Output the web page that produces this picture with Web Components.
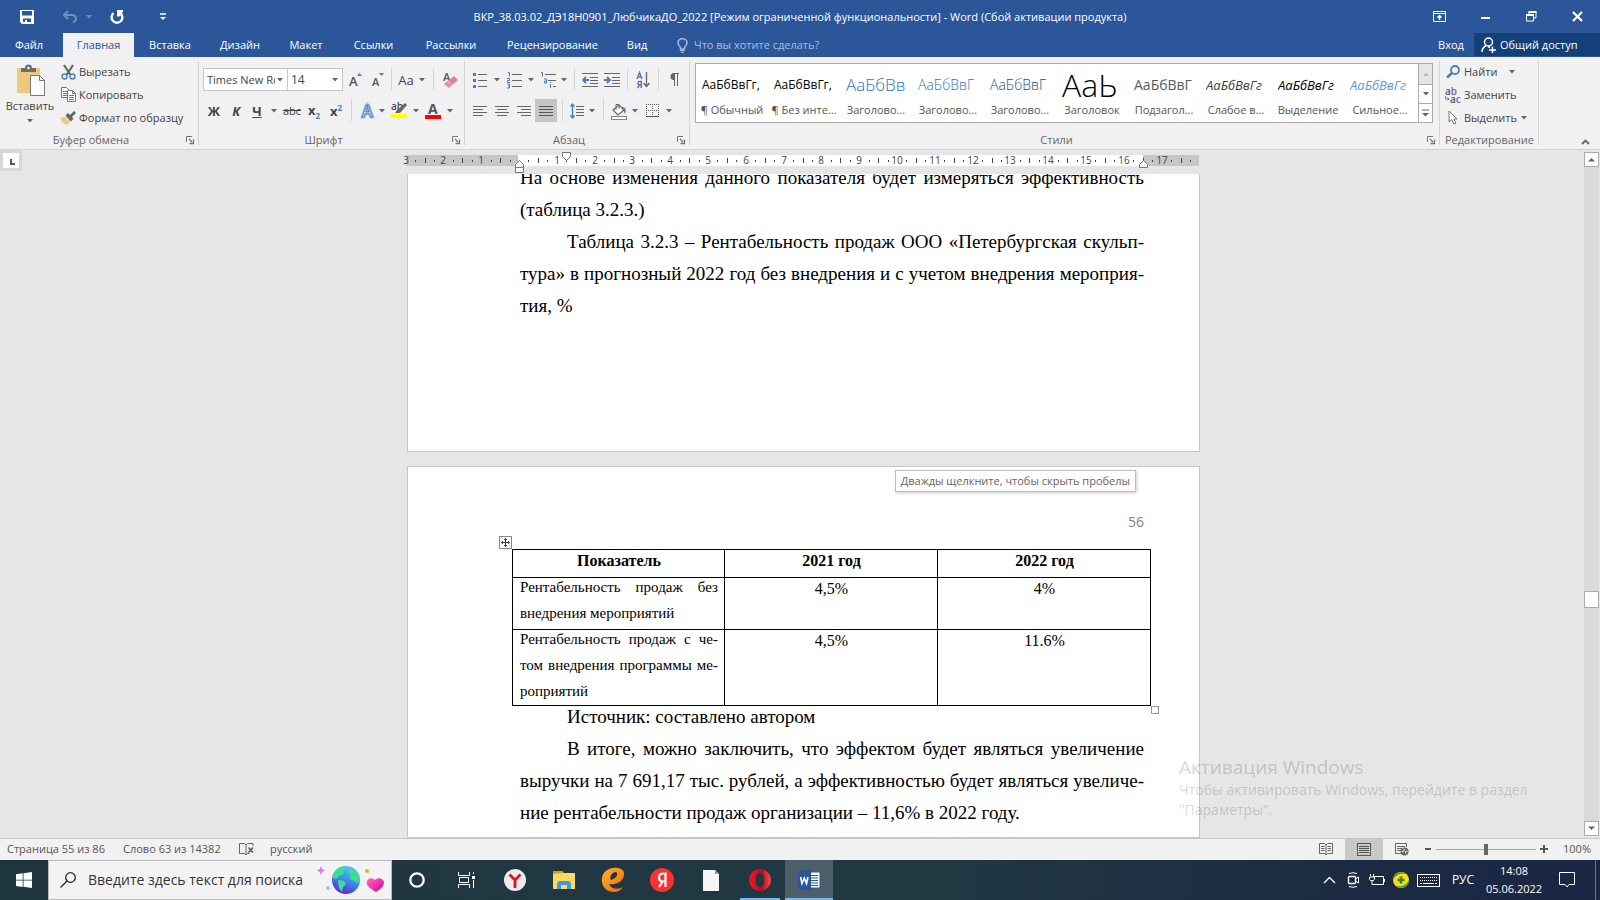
<!DOCTYPE html>
<html lang="ru">
<head>
<meta charset="utf-8">
<meta name="viewport" content="width=device-width, initial-scale=1">
<title>ВКР_38.03.02 – Word</title>
<style>
  html, body { margin: 0; height: 100%; }
  body { overflow: hidden; font: 11px/16px "Open Sans", "Noto Sans", sans-serif; color: #444; background: #e6e6e6; }
</style>
</head>
<body>
<word-app></word-app>

<script>
const ICONS = {
  save: [14, 14, '<path d="M0 0h14v14H2l-2-2z" fill="#fff"/><path d="M2 1h10v4.500H2zM3 8.500h8V12H7v-2H5v2H3z" fill="#2b579a"/>'],
  undo: [14, 13, '<path d="M5 1L1 5l4 4M1 5h8c5 0 5 7 1 7" fill="none" stroke="#6f8ec0" stroke-width="2"/>'],
  undoarrow: [6, 4, '<path d="M0 0h6L3 3.500z" fill="#6f8ec0"/>'],
  redo: [14, 14, '<path d="M3.500 3.200a5.400 5.400 0 1 0 7 0" fill="none" stroke="#fff" stroke-width="2.400"/><path d="M7 0h6v2.500h-1.500L12 4 9.500 6.500H7z" fill="#fff"/>'],
  custom: [6, 8, '<path d="M0 1h6" stroke="#fff" stroke-width="1.500"/><path d="M0 4h6L3 7z" fill="#fff"/>'],
  ribbonopts: [13, 11, '<path d="M.5 .5h12v10H.5zM.5 2.500h12" fill="none" stroke="#fff"/><path d="M6.500 9V5M4.500 6.500l2-2 2 2" fill="none" stroke="#fff" stroke-width="1.400"/>'],
  min: [9, 11, '<path d="M0 7h9" stroke="#fff" stroke-width="2"/>'],
  restore: [11, 11, '<path d="M.5 4h7v6h-7zM3 4V1h7v6H8" fill="none" stroke="#fff"/><path d="M0 4h8M2.500 1h8" stroke="#fff" stroke-width="2"/>'],
  close: [11, 11, '<path d="M1 1l9 9M10 1l-9 9" stroke="#fff" stroke-width="2.200"/>'],
  bulb: [11, 15, '<path d="M3.500 9.500C1 7 1 5.500 1 4.700a4.500 4 0 0 1 9 0c0 .8 0 2.300-2.500 4.800v1.500h-4z" fill="none" stroke="#a9bdda" stroke-width="1.500"/><path d="M3 12.500h5M4 14.300h3" stroke="#a9bdda" stroke-width="1.200"/>'],
  share: [15, 16, '<circle cx="7.500" cy="5" r="4" fill="none" stroke="#fff" stroke-width="1.500"/><path d="M1 15c0-3 1.500-5 4-6.500M7 9.500l2 1M8 13h7M11.500 9.500v6.500" fill="none" stroke="#fff" stroke-width="1.500"/>'],
  paste: [29, 31, '<rect x="1" y="3" width="23" height="25" fill="#edc87e"/><path d="M5 3h4a3.500 3.500 0 0 1 7 0h4v4H5z" fill="#6d6d6d"/><circle cx="12.500" cy="3" r="1.300" fill="#f1f1f1"/><path d="M14.500 10.500h9l5 5v15h-14z" fill="#fff" stroke="#777"/><path d="M23.500 10.500v5h5" fill="none" stroke="#777"/>'],
  cut: [15, 16, '<path d="M3 1l6.500 10M12 1L5.500 11" stroke="#666" stroke-width="2.200" fill="none"/><circle cx="3.500" cy="12.500" r="2.500" fill="none" stroke="#4a7ebb" stroke-width="1.400"/><circle cx="11.500" cy="12.500" r="2.500" fill="none" stroke="#4a7ebb" stroke-width="1.400"/>'],
  copy: [15, 15, '<path d="M.5 .5h5l2 2v8h-7z" fill="#fff" stroke="#777"/><path d="M2 4.500h4M2 6.500h4M2 8.500h4" stroke="#4a7ebb"/><path d="M6.500 3.500h5l3 3v8h-8z" fill="#fff" stroke="#777"/><path d="M11.500 3.500v3h3" stroke="#777" fill="none"/><path d="M8 8.500h5M8 10.500h5M8 12.500h5" stroke="#4a7ebb"/>'],
  brush: [16, 14, '<path d="M0 7l5-1 5 5-3 3C4 13 1 10 0 7z" fill="#edc48a"/><path d="M5.500 4.500L8 2l2 2 4-4 2 2-4 4 1.500 2-3 2.500z" fill="#666"/>'],
  launcher: [8, 8, '<path d="M.5 6V.5H6" fill="none" stroke="#777"/><path d="M3 3l3 3M7.500 3.500v4h-4" fill="none" stroke="#777" stroke-width="1.300"/>'],
  arrow: [6, 4, '<path d="M0 0h6L3 3.500z" fill="#666"/>'],
  grow: [13, 14, '<text x="0" y="13" font-size="13" font-weight="600" fill="#555">A</text><path d="M8 3h5l-2.500-3z" fill="#4a7ebb"/>'],
  shrink: [13, 14, '<text x="0" y="13" font-size="11" font-weight="600" fill="#555">A</text><path d="M7 0h5L9.500 3z" fill="#4a7ebb"/>'],
  clear: [15, 16, '<text x="0" y="9" font-size="11" font-weight="600" fill="#555">A</text><path d="M5 9l6-5 4 4-6 5z" fill="#e57f95"/><path d="M1 12l3-3 5 4-3 3z" fill="#e8909f"/>'],
  effects: [16, 16, '<text x="3" y="14" font-size="16" font-weight="600" fill="#fff" stroke="#a9c8ea" stroke-width="3" paint-order="stroke">A</text><text x="3" y="14" font-size="16" font-weight="600" fill="#fff" stroke="#3f7cc4">A</text>'],
  marker: [17, 17, '<text x="0" y="8" font-size="10" font-weight="600" fill="#444">ab</text><path d="M4 11l2-3 8-7 2 2-7 8z" fill="#666"/><rect y="12" width="16" height="4" fill="#ff0"/>'],
  fontcolor: [16, 17, '<text x="3" y="12" font-size="14" font-weight="700" fill="#555">A</text><rect y="13" width="16" height="4" fill="#f00"/>'],
  bullets: [14, 16, '<path d="M5 2.500h9M5 8.500h9M5 14.500h9" stroke="#666"/><path d="M0 1h3v3H0zM0 7h3v3H0zM0 13h3v3H0z" fill="#4a7ebb"/>'],
  numbers: [15, 16, '<path d="M5 2.500h10M5 8.500h10M5 14.500h10" stroke="#666"/><path d="M1 .5h1.500v4M0 6.500h2.500v2H.5v2H3M0 12h2.500v4H0M1 14h1.500" fill="none" stroke="#4a7ebb"/>'],
  multilevel: [16, 16, '<path d="M5 2.500h11M8 8.500h8M13 14.500h3" stroke="#666"/><path d="M1 .5h1.500v4M4 7h2.500v4H4.500V9H6M10.500 12v4M10.500 10v1" fill="none" stroke="#4a7ebb"/>'],
  dedent: [16, 14, '<path d="M0 .5h16M8 4.500h8M8 7.500h8M0 13.500h16M8 10.500h8" stroke="#666"/><path d="M7 7H1M4 4L1 7l3 3" fill="none" stroke="#4a7ebb" stroke-width="1.800"/>'],
  indent: [16, 14, '<path d="M0 .5h16M8 4.500h8M8 7.500h8M0 13.500h16M8 10.500h8" stroke="#666"/><path d="M0 7h6M3 4l3 3-3 3" fill="none" stroke="#4a7ebb" stroke-width="1.800"/>'],
  sort: [14, 16, '<path d="M1 7l2.500-6.500L6 7M1.800 5h3.500" fill="none" stroke="#4a7ebb" stroke-width="1.400"/><path d="M5.300 16V9.500H3.200c-1.500 0-1.700 3.300 0 3.300h2M3.500 13L1.500 16" fill="none" stroke="#8a58b0" stroke-width="1.400"/><path d="M10.500 0v14M7.500 11l3 3.500 3-3.500" fill="none" stroke="#666" stroke-width="1.300"/>'],
  pilcrow: [10, 13, '<path d="M5 0h5v1H9v12H8V1H6v12H5V7a3.500 3.500 0 0 1 0-7z" fill="#666"/>'],
  left: [14, 12, '<path d="M0 1.500h14M0 4.500h10M0 7.500h14M0 10.500h10" stroke="#666"/>'],
  center: [14, 12, '<path d="M0 1.500h14M2 4.500h10M0 7.500h14M2 10.500h10" stroke="#666"/>'],
  right: [14, 12, '<path d="M0 1.500h14M4 4.500h10M0 7.500h14M4 10.500h10" stroke="#666"/>'],
  justify: [14, 12, '<path d="M0 1.500h14M0 4.500h14M0 7.500h14M0 10.500h14" stroke="#555"/>'],
  spacing: [14, 16, '<path d="M6 3.500h8M6 6.500h8M6 9.500h8M6 12.500h8" stroke="#666"/><path d="M2.500 1v14M.5 3.500l2-2.500 2 2.500M.5 12.500l2 2.500 2-2.500" fill="none" stroke="#4a7ebb" stroke-width="1.400"/>'],
  shading: [16, 16, '<path d="M2 7l6-5 5 5-6 5z" fill="#fff" stroke="#666" stroke-width="1.200"/><path d="M5 7V1.500h3V6" fill="none" stroke="#666"/><path d="M11 4c3 0 5 2 3 7-1-1-1-4-3-5z" fill="#4a7ebb"/><rect x=".5" y="13.500" width="15" height="3" fill="#fff" stroke="#888"/>'],
  borders: [13, 13, '<path d="M.5 0v12M6.500 0v12M12.500 0v12M0 .5h13M0 6.500h13" stroke="#555" stroke-dasharray="1 1"/><path d="M0 12.500h13" stroke="#555"/>'],
  find: [14, 13, '<circle cx="9" cy="5" r="4" fill="none" stroke="#4a7ebb" stroke-width="1.800"/><path d="M6 8l-5 4.500" stroke="#4a7ebb" stroke-width="2.500"/>'],
  replace: [16, 16, '<text x="0" y="8" font-size="10" font-weight="600" fill="#555">a<tspan fill="#8a58b0">b</tspan></text><text x="5" y="16" font-size="10" font-weight="600" fill="#555">a<tspan fill="#4a7ebb">c</tspan></text><path d="M.5 9v3H4M2.500 10.500L4 12l-1.500 1.500" fill="none" stroke="#4a7ebb"/>'],
  pointer: [10, 15, '<path d="M1 1v11l2.500-2.500L6 14l2-1-2.300-4H9z" fill="#fff" stroke="#777"/>'],
  chevron: [9, 6, '<path d="M1 5l3.500-3.500L8 5" fill="none" stroke="#666" stroke-width="1.800"/>'],
  tab: [5, 6, '<path d="M1 0v5h4" fill="none" stroke="#555" stroke-width="2"/>'],
  up: [7, 5, '<path d="M0 4.500h7L3.500 1z" fill="#666"/>'],
  upoff: [6, 4, '<path d="M0 4h6L3 .5z" fill="#bbb"/>'],
  down: [7, 5, '<path d="M0 .5h7L3.500 4z" fill="#666"/>'],
  more: [7, 8, '<path d="M0 1h7" stroke="#666"/><path d="M0 4h7L3.500 7.500z" fill="#666"/>'],
  handle: [13, 13, '<rect x=".5" y=".5" width="12" height="12" fill="#fff" stroke="#888"/><path d="M6.500 2v9M2 6.500h9M5 3.500h3M5 9.500h3M3.500 5v3M9.500 5v3" stroke="#444"/>'],
  proof: [15, 13, '<path d="M7 2L5.500 .5h-5v10h5L7 12l1.500-1.500h2M7 2v10M7 2L8.500 .5H14V3" fill="none" stroke="#666"/><path d="M9.500 4.500l4.500 5M14 4.500l-4.500 5" stroke="#555" stroke-width="1.500"/>'],
  read: [14, 13, '<path d="M.5 .5h5L7 2 8.500 .5h5v10h-5L7 12l-1.500-1.500h-5zM7 2v10" fill="none" stroke="#666"/><path d="M2 3.500h3.500M2 5.500h3.500M2 7.500h3.500M8.500 3.500H12M8.500 5.500H12M8.500 7.500H12" stroke="#666"/>'],
  print: [14, 13, '<rect x=".5" y=".5" width="13" height="12" fill="none" stroke="#555"/><path d="M2 3.500h10M2 5.500h10M2 7.500h10M2 9.500h10" stroke="#555"/>'],
  web: [14, 13, '<path d="M6 10.500H.5V.5h11V4M2 3.500h8M2 5.500h5M2 7.500h4" fill="none" stroke="#666"/><circle cx="9.500" cy="8.500" r="4" fill="#666"/><path d="M8 5.500l1.500 1.500-1 1.500h-2M12.500 8l-2 .5v2" fill="none" stroke="#f1f1f1"/>'],
  minus: [6, 2, '<path d="M0 1h6" stroke="#555" stroke-width="2"/>'],
  plus: [8, 8, '<path d="M0 4h8M4 0v8" stroke="#555" stroke-width="2"/>'],
  win: [16, 16, '<path d="M0 2.200L6.700 1.300v6.400H0zM7.500 1.200L16 0v7.700H7.500zM0 8.500h6.700v6.400L0 14zM7.500 8.500H16V16l-8.500-1.200z" fill="#fff"/>'],
  search: [16, 16, '<circle cx="10.500" cy="5.500" r="4.800" fill="none" stroke="#222" stroke-width="1.300"/><path d="M7 9L.5 15.500" stroke="#222" stroke-width="1.300"/>'],
  planet: [68, 30, '<defs><linearGradient id="a" x1=".7" y1="0" x2=".3" y2="1"><stop offset="0" stop-color="#5cc8f5"/><stop offset=".5" stop-color="#3b8df0"/><stop offset="1" stop-color="#6a1fd0"/></linearGradient><linearGradient id="b" x1="0" y1="0" x2="1" y2="1"><stop offset="0" stop-color="#ff6ec0"/><stop offset="1" stop-color="#d4009a"/></linearGradient></defs><path d="M4 1l1.300 3L8 5.500 5.300 7 4 10 2.700 7 0 5.500 2.700 4z" fill="#e27af2"/><circle cx="11" cy="23" r="2" fill="#78d8ee"/><circle cx="29" cy="15" r="14" fill="url(#a)"/><path d="M16 10c2-5 6-8 11-9l2 3-3 2 1 3-5 2-3 3-3-1zM21 15l6 1 2 3-3 3-1 5-3-4zM33 4l6 2 4 9-3 3-4-3-3-1 1-4-3-2z" fill="#3be08e"/><circle cx="50" cy="6" r="2" fill="#f6a91b"/><path d="M59 27c-9-5-10-8-9-11 1-3 5-4 8-1 3-3 8-2 9 2 0 4-3 7-8 10z" fill="url(#b)"/>'],
  cortana: [16, 16, '<circle cx="8" cy="8" r="6.700" fill="none" stroke="#fff" stroke-width="2.300"/>'],
  taskview: [17, 16, '<path d="M.5 0v3.500h11V0M.5 16v-3.500h11V16M1.500 5.500h9v5h-9zM15.500 0v2M15.500 8v8" fill="none" stroke="#fff"/><rect x="14" y="4" width="3" height="3" fill="#fff"/>'],
  ybrowser: [22, 22, '<circle cx="11" cy="11" r="11" fill="#ececec"/><path d="M5.500 5.500L11 11l5.500-5.500M11 10.500V19" fill="none" stroke="#d8151b" stroke-width="2.800"/>'],
  folder: [22, 18, '<path d="M0 0h9l2 2h-1v5H0z" fill="#e2a100"/><rect y="2" width="22" height="16" fill="#ffd766"/><path d="M0 3l9-1 1-2H0z" fill="#dd9f10"/><path d="M4 18v-6l2-2h10l2 2v6h-4v-4H8v4z" fill="#3d9be0"/>'],
  eclipse: [24, 24, '<defs><linearGradient id="c" x1="0" y1="0" x2="1" y2="1"><stop offset="0" stop-color="#ffb22e"/><stop offset="1" stop-color="#f26a0f"/></linearGradient></defs><path d="M12 0C4 1 0 7 1 14c1 7 7 10 12 10 4 0 7-2 9-5-6 3-12 2-14-3 8 1 15-3 15-10 1-4-5-7-11-6zm3 4c2 1 2 6-5 8-2-3 1-8 5-8z" fill="url(#c)" fill-rule="evenodd"/>'],
  yandex: [24, 24, '<circle cx="12" cy="12" r="12" fill="#fc3130"/><path d="M15.500 19V5.500h-2.500c-2.500 0-4 1.500-4 4s1.500 4 4 4h2.500M12.500 13.500L9 19" fill="none" stroke="#fff" stroke-width="2.200"/>'],
  file: [16, 21, '<path d="M0 0h12l4 4v17H0z" fill="#f6f6f6"/><path d="M12 0v4h4z" fill="#999"/>'],
  opera: [22, 22, '<defs><linearGradient id="d" x1="0" y1="0" x2="1" y2="0"><stop offset="0" stop-color="#f0162c"/><stop offset=".6" stop-color="#c20d20"/><stop offset="1" stop-color="#f04a52"/></linearGradient></defs><path d="M11 0a11 11 0 1 0 0 22a11 11 0 1 0 0-22zm0 3.500c3 0 4.300 4 4.300 7.500s-1.300 7.500-4.300 7.500S6.700 14.500 6.700 11 8 3.500 11 3.500z" fill="url(#d)" fill-rule="evenodd"/>'],
  word: [22, 22, '<rect x="11" y="3" width="11" height="16" fill="#fff" stroke="#2b579a"/><path d="M13 6.500h7M13 9h7M13 11.500h7M13 14h7M13 16.500h7" stroke="#2b579a"/><path d="M0 2.500L13 0v22L0 19.500z" fill="#2b579a"/><path d="M2.500 8l1.500 6.500L6.300 9l2.200 5.500L10 8" fill="none" stroke="#fff" stroke-width="1.600"/>'],
  traychev: [13, 8, '<path d="M1 7l5.500-5.500L12 7" fill="none" stroke="#fff" stroke-width="1.400"/>'],
  camera: [12, 16, '<path d="M2 1.500Q6 0 10 1.500M2 14.500Q6 16 10 14.500" fill="none" stroke="#fff"/><rect x="1.500" y="4.500" width="7" height="7" rx="1" fill="none" stroke="#fff" stroke-width="1.400"/><path d="M8.500 7l3-2v6l-3-2" fill="none" stroke="#fff"/>'],
  battery: [16, 12, '<path d="M5 2.500h9.500v8h-9M15.500 5v3" fill="none" stroke="#fff"/><path d="M1.500 0v2.500M4.500 0v2.500M.5 3h5v2.500l-1 1h-3l-1-1zM3 6.500v4h3" fill="none" stroke="#fff"/>'],
  guard: [16, 16, '<circle cx="8" cy="8" r="8" fill="#ffd91c"/><path d="M0 8a8 8 0 0 1 13-6c-5-1-10 0-13 6zM16 8a8 8 0 0 1-13 6c5 1 10 0 13-6z" fill="#3f9c35"/><path d="M8 4.500v7M4.500 8h7" stroke="#2a8a2c" stroke-width="2.600"/>'],
  keyboard: [23, 13, '<rect x=".5" y=".5" width="22" height="12" fill="none" stroke="#fff"/><path d="M3 3.500h17M3 6.500h17" stroke="#fff" stroke-dasharray="1 1"/><path d="M3 9.500h2M6 9.500h11M18 9.500h2" stroke="#fff"/>'],
  notify: [16, 16, '<path d="M.5 .5h15v12H10L8 15l-2-2.500H.5z" fill="none" stroke="#fff"/>'],
};

const BUTTON_RESET = `button{font:inherit;color:inherit;background:none;border:0;padding:0;margin:0;cursor:default}`;

function define(name, html, setup) {
  const tpl = document.createElement('template');
  tpl.innerHTML = html;
  customElements.define(name, class extends HTMLElement {
    constructor() {
      super();
      this.attachShadow({ mode: 'open' }).append(tpl.content.cloneNode(true));
    }
    connectedCallback() { if (setup) setup(this, this.shadowRoot); }
  });
}

define('ui-icon', `<style>:host{display:inline-flex;flex:none}svg{display:block;overflow:visible}</style>`, (el, root) => {
  const [w, h, body] = ICONS[el.getAttribute('name')];
  root.innerHTML += `<svg width="${w}" height="${h}" viewBox="0 0 ${w} ${h}" font-family="Open Sans, sans-serif" aria-hidden="true">${body}</svg>`;
});

/* One cell of a ribbon row: a button of a given width holding an icon or a letter. */
define('tool-button', `<style>${BUTTON_RESET}
  :host{display:block;flex:none;height:23px}
  button{width:100%;height:100%;display:flex;align-items:center;justify-content:center;font-size:13px}
  :host([pressed]) button{background:#c5c5c5}
</style><button type="button"><slot></slot></button>`, (el, root) => {
  el.style.width = (el.getAttribute('w') || 22) + 'px';
  root.querySelector('button').setAttribute('aria-label', el.getAttribute('label') || 'Меню');
});

define('tool-separator', `<style>:host{display:flex;justify-content:center;flex:none;height:22px}i{width:1px;background:#d4d4d4}</style><i></i>`,
  el => { el.style.width = el.getAttribute('w') + 'px'; });

define('labelled-tool', `<style>${BUTTON_RESET}
  :host{display:block;height:23px}
  button{height:100%;display:flex;align-items:center}
  .pic{width:18px;display:flex;justify-content:center;margin-right:2px}
</style><button type="button"><span class="pic"><slot name="icon"></slot></span><slot></slot></button>`);

define('ribbon-group', `<style>${BUTTON_RESET}
  :host{display:flex;flex:none;flex-direction:column;box-sizing:border-box;position:relative;padding:3px 4px 0;color:#444}
  :host::after{content:"";position:absolute;right:0;top:4px;bottom:4px;width:1px;background:#d4d4d4}
  .body{height:72px;display:flex}
  ::slotted(*){flex:1;min-width:0}
  footer{display:flex;height:18px;align-items:center;color:#666}
  footer span{flex:1;text-align:center}
  footer button{display:none;width:8px;height:8px;margin-right:1px}
  :host([launcher]) footer span{padding-right:8px}
  :host([launcher]) footer button{display:flex}
</style><div class="body"><slot></slot></div><footer><span></span><button type="button" aria-label="Параметры"><ui-icon name="launcher"></ui-icon></button></footer>`,
  (el, root) => { root.querySelector('span').textContent = el.getAttribute('name'); });

define('title-bar', `<style>${BUTTON_RESET}
  :host{display:grid;grid-template-columns:1fr auto 1fr;align-items:center;height:33px;background:#2b579a;color:#fff}
  .quick,.win{display:flex;align-items:center;height:100%}
  .quick button,.win button{display:flex;justify-content:center;align-items:center}
  .quick button{width:28px}
  .quick{padding-left:13px}
  .quick .u{margin-left:15px}.quick .a{width:10px}.quick .r{margin-left:9px}.quick .c{margin-left:18px}
  .win{justify-content:flex-end}.win button{width:46px}
  h1{font-size:11px;line-height:16px;font-weight:400;margin:0;white-space:nowrap}
</style>
<div class="quick">
  <button type="button" aria-label="Сохранить"><ui-icon name="save"></ui-icon></button>
  <button type="button" class="u" aria-label="Отменить"><ui-icon name="undo"></ui-icon></button>
  <button type="button" class="a" aria-label="Список отмены"><ui-icon name="undoarrow"></ui-icon></button>
  <button type="button" class="r" aria-label="Повторить"><ui-icon name="redo"></ui-icon></button>
  <button type="button" class="c" aria-label="Настройка панели"><ui-icon name="custom"></ui-icon></button>
</div>
<h1>ВКР_38.03.02_ДЭ18Н0901_ЛюбчикаДО_2022 [Режим ограниченной функциональности] - Word (Сбой активации продукта)</h1>
<div class="win">
  <button type="button" aria-label="Параметры ленты"><ui-icon name="ribbonopts"></ui-icon></button>
  <button type="button" aria-label="Свернуть"><ui-icon name="min"></ui-icon></button>
  <button type="button" aria-label="Восстановить"><ui-icon name="restore"></ui-icon></button>
  <button type="button" aria-label="Закрыть"><ui-icon name="close"></ui-icon></button>
</div>`);

define('ribbon-tabs', `<style>${BUTTON_RESET}
  :host{display:flex;height:24px;background:#2b579a;color:#fff}
  button{flex:none}
  .on{background:#f1f1f1;color:#2b579a}
  label{flex:1;min-width:0;display:flex;align-items:center;gap:6px;padding-left:15px}
  input{flex:1;min-width:0;border:0;padding:0;background:none;font:inherit;color:#fff;outline:0}
  input::placeholder{color:#a9bdda;opacity:1}
  .in{width:46px}
  .share{width:126px;background:#134079;display:flex;align-items:center;gap:4px;padding-left:7px;height:23px}
</style>
<button type="button" style="width:58px;margin-right:5px">Файл</button>
<button type="button" class="on" style="width:71px">Главная</button>
<button type="button" style="width:72px">Вставка</button>
<button type="button" style="width:68px">Дизайн</button>
<button type="button" style="width:64px">Макет</button>
<button type="button" style="width:71px">Ссылки</button>
<button type="button" style="width:84px">Рассылки</button>
<button type="button" style="width:119px">Рецензирование</button>
<button type="button" style="width:50px">Вид</button>
<label><ui-icon name="bulb"></ui-icon><input type="text" placeholder="Что вы хотите сделать?" aria-label="Помощник"></label>
<button type="button" class="in">Вход</button>
<button type="button" class="share"><ui-icon name="share"></ui-icon>Общий доступ</button>`);

define('style-card', `<style>${BUTTON_RESET}
  :host{display:block;width:72px;flex:none}
  button{width:100%;height:100%;display:flex;flex-direction:column;overflow:hidden}
  .sample{height:37px;line-height:42px;margin:0 6px;width:60px;overflow:hidden;white-space:nowrap;text-align:left;color:var(--ink,#000);font-size:var(--size,12px);font-style:var(--slant,normal);font-weight:var(--weight,400)}
  .label{height:20px;line-height:18px;width:100%;text-align:center;white-space:nowrap;color:#555}
</style><button type="button"><span class="sample"><slot></slot></span><span class="label"></span></button>`,
  (el, root) => { root.querySelector('.label').textContent = el.getAttribute('name'); });

define('style-gallery', `<style>${BUTTON_RESET}
  :host{display:flex;height:60px;box-sizing:border-box;border:1px solid #ababab;background:#fff;margin:3px 3px 0 1px}
  .list{flex:1;min-width:0;display:flex;overflow:hidden}
  .nav{width:14px;display:grid;grid-template-rows:21px 19px 18px}
  .nav button{display:flex;align-items:center;justify-content:center;border-left:1px solid #ababab;border-bottom:1px solid #ababab}
  .nav button:first-child{background:#e6e6e6}.nav button:last-child{border-bottom:0}
</style>
<div class="list">
  <style-card name="¶ Обычный">АаБбВвГг,</style-card>
  <style-card name="¶ Без инте...">АаБбВвГг,</style-card>
  <style-card name="Заголово..." style="--ink:#2e74b5;--size:17px;--weight:300">АаБбВв</style-card>
  <style-card name="Заголово..." style="--ink:#2e74b5;--size:14px;--weight:300">АаБбВвГ</style-card>
  <style-card name="Заголово..." style="--ink:#1f4d78;--size:14px;--weight:300">АаБбВвГ</style-card>
  <style-card name="Заголовок" style="--size:32px;--weight:300">АаЬ</style-card>
  <style-card name="Подзагол..." style="--ink:#5a5a5a;--size:14px">АаБбВвГ</style-card>
  <style-card name="Слабое в..." style="--ink:#404040;--slant:italic;--size:13px">АаБбВвГг</style-card>
  <style-card name="Выделение" style="--slant:italic;--size:13px">АаБбВвГг</style-card>
  <style-card name="Сильное..." style="--ink:#5b9bd5;--slant:italic;--size:13px">АаБбВвГг</style-card>
</div>
<div class="nav">
  <button type="button" aria-label="Вверх"><ui-icon name="upoff"></ui-icon></button>
  <button type="button" aria-label="Вниз"><ui-icon name="arrow"></ui-icon></button>
  <button type="button" aria-label="Все стили"><ui-icon name="more"></ui-icon></button>
</div>`);

define('combo-box', `<style>
  :host{display:block;position:relative;flex:none;height:23px}
  select{appearance:none;width:100%;height:100%;box-sizing:border-box;border:1px solid #c6c6c6;border-radius:0;background:#fff;font:inherit;font-size:12px;color:#444;padding:0 12px 0 3px;margin:0;outline:0}
  ui-icon{position:absolute;right:5px;top:10px;pointer-events:none}
</style><select></select><ui-icon name="arrow"></ui-icon>`, (el, root) => {
  const s = root.querySelector('select');
  s.append(new Option(el.getAttribute('value')));
  s.setAttribute('aria-label', el.getAttribute('label'));
  if (el.hasAttribute('small')) s.style.fontSize = '11px';
});

define('word-ribbon', `<style>${BUTTON_RESET}
  :host{display:flex;height:92px;background:#f1f1f1;border-bottom:1px solid #d2d2d2}
  .rows{display:flex;flex-direction:column;padding-top:8px;gap:8px}
  .row{display:flex;height:23px}
  .clip{display:flex}
  .paste{width:52px;display:flex;flex-direction:column;align-items:center;padding-top:5px}
  .paste ui-icon:last-child{margin-top:5px}
  .paste span{margin-top:2px}
  .stack{margin-left:3px}
  b,i,u,s{font-size:13px;line-height:16px}
  i,u{font-weight:700} s{font-size:11px}
  sub,sup{font-size:8px;line-height:8px;color:#4a7ebb}
  .fold{flex:1;display:flex;justify-content:flex-end;align-items:flex-end;padding:0 10px 2px 0}
  .fold button{height:14px}
</style>
<ribbon-group name="Буфер обмена" launcher style="width:199px"><div class="clip">
  <button type="button" class="paste"><ui-icon name="paste"></ui-icon><span>Вставить</span><ui-icon name="arrow"></ui-icon></button>
  <div class="stack">
    <labelled-tool><ui-icon slot="icon" name="cut"></ui-icon>Вырезать</labelled-tool>
    <labelled-tool><ui-icon slot="icon" name="copy"></ui-icon>Копировать</labelled-tool>
    <labelled-tool><ui-icon slot="icon" name="brush"></ui-icon>Формат по образцу</labelled-tool>
  </div></div>
</ribbon-group>
<ribbon-group name="Шрифт" launcher style="width:266px"><div class="rows">
  <div class="row">
    <combo-box small value="Times New Roman" label="Шрифт" style="width:85px"></combo-box>
    <combo-box value="14" label="Размер" style="width:56px;margin-left:-1px"></combo-box>
    <tool-button w="24" label="Увеличить размер"><ui-icon name="grow"></ui-icon></tool-button>
    <tool-button label="Уменьшить размер"><ui-icon name="shrink"></ui-icon></tool-button>
    <tool-separator w="5"></tool-separator>
    <tool-button w="24" label="Регистр">Aa</tool-button>
    <tool-button w="8"><ui-icon name="arrow"></ui-icon></tool-button>
    <tool-separator w="14"></tool-separator>
    <tool-button w="20" label="Очистить формат"><ui-icon name="clear"></ui-icon></tool-button>
  </div>
  <div class="row">
    <tool-button label="Полужирный"><b>Ж</b></tool-button>
    <tool-button label="Курсив"><i>К</i></tool-button>
    <tool-button w="20" label="Подчеркнутый"><u>Ч</u></tool-button>
    <tool-button w="14"><ui-icon name="arrow"></ui-icon></tool-button>
    <tool-button label="Зачеркнутый"><s>abc</s></tool-button>
    <tool-button label="Подстрочный"><b>x<sub>2</sub></b></tool-button>
    <tool-button label="Надстрочный"><b>x<sup>2</sup></b></tool-button>
    <tool-separator w="9"></tool-separator>
    <tool-button label="Эффекты"><ui-icon name="effects"></ui-icon></tool-button>
    <tool-button w="8"><ui-icon name="arrow"></ui-icon></tool-button>
    <tool-button w="26" label="Цвет выделения"><ui-icon name="marker"></ui-icon></tool-button>
    <tool-button w="8"><ui-icon name="arrow"></ui-icon></tool-button>
    <tool-button w="26" label="Цвет текста"><ui-icon name="fontcolor"></ui-icon></tool-button>
    <tool-button w="8"><ui-icon name="arrow"></ui-icon></tool-button>
  </div></div>
</ribbon-group>
<ribbon-group name="Абзац" launcher style="width:225px"><div class="rows">
  <div class="row">
    <tool-button label="Маркеры"><ui-icon name="bullets"></ui-icon></tool-button>
    <tool-button w="12"><ui-icon name="arrow"></ui-icon></tool-button>
    <tool-button label="Нумерация"><ui-icon name="numbers"></ui-icon></tool-button>
    <tool-button w="12"><ui-icon name="arrow"></ui-icon></tool-button>
    <tool-button label="Многоуровневый список"><ui-icon name="multilevel"></ui-icon></tool-button>
    <tool-button w="10"><ui-icon name="arrow"></ui-icon></tool-button>
    <tool-separator w="10"></tool-separator>
    <tool-button label="Уменьшить отступ"><ui-icon name="dedent"></ui-icon></tool-button>
    <tool-button label="Увеличить отступ"><ui-icon name="indent"></ui-icon></tool-button>
    <tool-separator w="8"></tool-separator>
    <tool-button w="24" label="Сортировка"><ui-icon name="sort"></ui-icon></tool-button>
    <tool-separator w="6"></tool-separator>
    <tool-button w="26" label="Все знаки"><ui-icon name="pilcrow"></ui-icon></tool-button>
  </div>
  <div class="row">
    <tool-button label="По левому краю"><ui-icon name="left"></ui-icon></tool-button>
    <tool-button label="По центру"><ui-icon name="center"></ui-icon></tool-button>
    <tool-button label="По правому краю"><ui-icon name="right"></ui-icon></tool-button>
    <tool-button label="По ширине" pressed><ui-icon name="justify"></ui-icon></tool-button>
    <tool-separator w="10"></tool-separator>
    <tool-button w="20" label="Интервал"><ui-icon name="spacing"></ui-icon></tool-button>
    <tool-button w="10"><ui-icon name="arrow"></ui-icon></tool-button>
    <tool-separator w="12"></tool-separator>
    <tool-button w="20" label="Заливка"><ui-icon name="shading"></ui-icon></tool-button>
    <tool-button w="12"><ui-icon name="arrow"></ui-icon></tool-button>
    <tool-button label="Границы"><ui-icon name="borders"></ui-icon></tool-button>
    <tool-button w="12"><ui-icon name="arrow"></ui-icon></tool-button>
  </div></div>
</ribbon-group>
<ribbon-group name="Стили" launcher style="flex:0 1 750px;min-width:0"><style-gallery></style-gallery></ribbon-group>
<ribbon-group name="Редактирование" style="width:99px"><div>
  <labelled-tool><ui-icon slot="icon" name="find"></ui-icon>Найти<ui-icon name="arrow" style="margin-left:12px"></ui-icon></labelled-tool>
  <labelled-tool><ui-icon slot="icon" name="replace"></ui-icon>Заменить</labelled-tool>
  <labelled-tool><ui-icon slot="icon" name="pointer"></ui-icon>Выделить<ui-icon name="arrow" style="margin-left:4px"></ui-icon></labelled-tool>
</div></ribbon-group>
<div class="fold"><button type="button" aria-label="Свернуть ленту"><ui-icon name="chevron"></ui-icon></button></div>`);

/* Horizontal ruler: numbers every centimetre, a tick at each half, dots at the quarters. */
define('doc-ruler', `<style>:host{display:block;width:793px;height:24px;flex:none;position:relative;z-index:1}svg{display:block;overflow:visible}</style>`, (el, root) => {
  const cm = 37.8, zero = 112;
  let s = '<rect x="-1" y="5" width="112" height="11" fill="#c6c6c6"/><rect x="111" y="5" width="625" height="11" fill="#fff"/><rect x="736" y="5" width="56" height="11" fill="#c6c6c6"/>';
  for (let q = -12; q <= 71; q++) {
    const x = Math.round(zero + q * cm / 4), m = ((q % 4) + 4) % 4;
    if (m === 0) { if (q) s += `<text x="${x}" y="14" text-anchor="middle">${Math.abs(q / 4)}</text>`; }
    else s += m === 2 ? `<rect x="${x}" y="8" width="1" height="5"/>` : `<rect x="${x}" y="10" width="1" height="2"/>`;
  }
  const st = 'fill="#fff" stroke="#777"';
  s += `<path d="M155.500 2.500h8v4l-4 4-4-4z" ${st}/><path d="M108.500 17.500v-3l4-4 4 4v3zM108.500 17.500h8v5h-8z" ${st}/><path d="M732.500 17.500v-3l4-4 4 4v3z" ${st}/>`;
  root.innerHTML += `<svg width="793" height="24" fill="#444" font-size="10" font-family="Open Sans, sans-serif">${s}</svg>`;
});

define('doc-page', `<style>
  :host{display:block;flex:none;box-sizing:border-box;width:793px;background:#fff;border:1px solid #c6c6c6;padding:0 55px 0 112px;position:relative;font:19px/32px "Liberation Serif","Times New Roman",serif;color:#000}
</style><slot></slot>`);

/* A text line as Word broke it; "full" stretches it to both margins. */
define('doc-line', `<style>
  :host{display:block;white-space:nowrap;text-align-last:left}
  :host([full]){text-align-last:justify}
  :host([first]){padding-left:47px}
</style><slot></slot>`);

define('data-table', `<style>
  :host{display:block;position:relative;width:639px;margin:17px 0 0 -8px}
  table{width:100%;border-collapse:collapse;table-layout:fixed;font-size:16px;line-height:21px;text-align:center}
  th,td{border:1px solid #000;padding:0 6px 0 7px;vertical-align:top}
  tbody th{font-weight:400;font-size:15px;line-height:26px}
  tbody th div{margin-top:-4px}
  .move{position:absolute;left:-13px;top:-13px}
  .size{position:absolute;right:-8px;bottom:-8px;width:6px;height:6px;border:1px solid #999;background:#fff}
</style>
<table>
  <colgroup><col style="width:212px"><col><col></colgroup>
  <thead><tr style="height:28px"><th>Показатель</th><th>2021 год</th><th>2022 год</th></tr></thead>
  <tbody>
    <tr style="height:52px"><th scope="row"><div><doc-line full>Рентабельность продаж без</doc-line><doc-line>внедрения мероприятий</doc-line></div></th><td>4,5%</td><td>4%</td></tr>
    <tr style="height:76px"><th scope="row"><div><doc-line full>Рентабельность продаж с че-</doc-line><doc-line full>том внедрения программы ме-</doc-line><doc-line>роприятий</doc-line></div></th><td>4,5%</td><td>11.6%</td></tr>
  </tbody>
</table>
<ui-icon name="handle" class="move"></ui-icon><span class="size"></span>`);

define('v-scrollbar', `<style>${BUTTON_RESET}
  :host{display:flex;flex-direction:column;background:#dadada;margin:2px 1px 2px 0}
  button,.thumb{box-sizing:border-box;height:15px;background:#fff;border:1px solid #ababab;display:flex;align-items:center;justify-content:center}
  .before{flex:424}.after{flex:213}
  .thumb{height:17px}
</style><button type="button" aria-label="Прокрутить вверх"><ui-icon name="up"></ui-icon></button><div class="before"></div><div class="thumb"></div><div class="after"></div><button type="button" aria-label="Прокрутить вниз"><ui-icon name="down"></ui-icon></button>`);

define('doc-workspace', `<style>${BUTTON_RESET}
  :host{display:grid;grid-template-columns:23px 1fr 16px;flex:1;min-height:0;background:#e6e6e6;position:relative}
  .corner{width:22px;height:21px;background:#d8d8d8;display:flex;align-items:center;justify-content:center}
  .corner button{width:16px;height:15px;background:#fff;display:flex;align-items:center;justify-content:center;padding:3px 0 0 2px;box-sizing:border-box}
  main{display:flex;flex-direction:column;align-items:center;min-height:0;min-width:0}
  .view{flex:1;min-height:0;overflow:hidden;display:flex;flex-direction:column;gap:14px}
  .one{height:290px;margin-top:-12px;border-top:0}
  .two{flex:1 0 372px;padding-top:45px}
  .num{font:14px/20px "Open Sans",sans-serif;color:#7f7f7f;text-align:right}
  .src{line-height:22px;margin-bottom:5px}
  .tip{position:absolute;right:63px;top:3px;border:1px solid #bebebe;background:#fff;font:11px/20px "Open Sans",sans-serif;color:#6b5f5f;padding:0 5px;box-shadow:1px 1px 3px #0003}
  .mark{position:absolute;right:68px;bottom:18px;width:353px;white-space:nowrap;font:14px/20px "Open Sans",sans-serif;color:#0000002e}
  .mark strong{display:block;font-weight:400;font-size:19px;line-height:26px}
</style>
<div class="corner"><button type="button" aria-label="Табуляция"><ui-icon name="tab"></ui-icon></button></div>
<main>
  <doc-ruler></doc-ruler>
  <div class="view">
    <doc-page class="one">
      <doc-line full>На основе изменения данного показателя будет измеряться эффективность</doc-line>
      <doc-line>(таблица 3.2.3.)</doc-line>
      <doc-line full first>Таблица 3.2.3 – Рентабельность продаж ООО «Петербургская скульп-</doc-line>
      <doc-line full>тура» в прогнозный 2022 год без внедрения и с учетом внедрения мероприя-</doc-line>
      <doc-line>тия, %</doc-line>
    </doc-page>
    <doc-page class="two">
      <div class="tip" role="tooltip">Дважды щелкните, чтобы скрыть пробелы</div>
      <div class="num">56</div>
      <data-table></data-table>
      <doc-line class="src" first>Источник: составлено автором</doc-line>
      <doc-line full first>В итоге, можно заключить, что эффектом будет являться увеличение</doc-line>
      <doc-line full>выручки на 7 691,17 тыс. рублей, а эффективностью будет являться увеличе-</doc-line>
      <doc-line>ние рентабельности продаж организации – 11,6% в 2022 году.</doc-line>
    </doc-page>
  </div>
</main>
<v-scrollbar></v-scrollbar>
<div class="mark"><strong>Активация Windows</strong>Чтобы активировать Windows, перейдите в раздел<br>"Параметры".</div>`);

define('status-bar', `<style>${BUTTON_RESET}
  :host{display:flex;align-items:stretch;height:21px;background:#f1f1f1;border-top:1px solid #c6c6c6;color:#555;padding:0 9px 0 7px}
  button{display:flex;align-items:center;flex:none;padding-bottom:1px}
  .view{width:38px;justify-content:center}.on{background:#c8c8c8}
  .sp{flex:1}
  input{appearance:none;width:100px;height:20px;margin:0 4px;background:linear-gradient(#a6a6a6,#a6a6a6) center/100% 1px no-repeat}
  input::-webkit-slider-thumb{appearance:none;width:4px;height:11px;background:#666}
  .sign{width:8px;justify-content:center}
  .pct{margin-left:15px}
</style>
<button type="button" style="width:116px">Страница 55 из 86</button>
<button type="button" style="width:116px">Слово 63 из 14382</button>
<button type="button" style="width:31px" aria-label="Проверка правописания"><ui-icon name="proof"></ui-icon></button>
<button type="button">русский</button>
<span class="sp"></span>
<button type="button" class="view" aria-label="Режим чтения"><ui-icon name="read"></ui-icon></button>
<button type="button" class="view on" aria-label="Разметка страницы"><ui-icon name="print"></ui-icon></button>
<button type="button" class="view" aria-label="Веб-документ"><ui-icon name="web"></ui-icon></button>
<button type="button" class="sign" style="margin-left:3px" aria-label="Уменьшить"><ui-icon name="minus"></ui-icon></button>
<input type="range" min="0" max="100" value="50" aria-label="Масштаб">
<button type="button" class="sign" aria-label="Увеличить"><ui-icon name="plus"></ui-icon></button>
<button type="button" class="pct">100%</button>`);

define('task-app', `<style>${BUTTON_RESET}
  :host{display:block;width:48px;height:40px;flex:none;position:relative}
  button{width:100%;height:100%;display:flex;align-items:center;justify-content:center}
  :host([open]) button{box-shadow:inset 0 -2px #76b9ed}
  :host([open]){width:40px;margin:0 4px}
  :host([active]){background:#4d5f68;width:48px;margin:0}
</style><button type="button"><slot></slot></button>`, (el, root) =>
  root.querySelector('button').setAttribute('aria-label', el.getAttribute('label')));

define('task-bar', `<style>${BUTTON_RESET}
  :host{display:flex;height:40px;background:linear-gradient(90deg,#20363f 0,#213742 60%,#1b2a42 85%,#1a2744);color:#fff}
  label{width:344px;box-sizing:border-box;border:1px solid #b9b9b9;background:#f3f3f3;display:flex;align-items:center;padding:0 6px 0 11px}
  input{flex:1;min-width:0;border:0;background:none;padding:0;margin-left:12px;font:14px/20px "Open Sans",sans-serif;outline:0}
  input::placeholder{color:#333;opacity:1}
  .apps{display:flex;gap:1px;flex:1;padding-left:1px}
  .tray{display:flex}
  .tray button{display:flex;align-items:center;justify-content:center;width:24px}
  .tray .wide{width:30px}
  .tray .lang{width:40px;font-size:12px}
  .tray .clock{width:62px;flex-direction:column;line-height:18px}
  .tray .note{width:44px;margin-right:6px}
  .desk{width:4px;border-left:1px solid #6d7688}
</style>
<task-app label="Пуск"><ui-icon name="win"></ui-icon></task-app>
<label><ui-icon name="search"></ui-icon><input type="text" placeholder="Введите здесь текст для поиска" aria-label="Поиск"><ui-icon name="planet"></ui-icon></label>
<div class="apps">
  <task-app label="Кортана"><ui-icon name="cortana"></ui-icon></task-app>
  <task-app label="Представление задач"><ui-icon name="taskview"></ui-icon></task-app>
  <task-app label="Яндекс Браузер"><ui-icon name="ybrowser"></ui-icon></task-app>
  <task-app label="Проводник"><ui-icon name="folder"></ui-icon></task-app>
  <task-app label="Браузер"><ui-icon name="eclipse"></ui-icon></task-app>
  <task-app label="Яндекс"><ui-icon name="yandex"></ui-icon></task-app>
  <task-app label="Файл"><ui-icon name="file"></ui-icon></task-app>
  <task-app label="Opera" open><ui-icon name="opera"></ui-icon></task-app>
  <task-app label="Word" open active><ui-icon name="word"></ui-icon></task-app>
</div>
<div class="tray">
  <button type="button" aria-label="Скрытые значки"><ui-icon name="traychev"></ui-icon></button>
  <button type="button" aria-label="Собрание"><ui-icon name="camera"></ui-icon></button>
  <button type="button" aria-label="Батарея"><ui-icon name="battery"></ui-icon></button>
  <button type="button" aria-label="Антивирус"><ui-icon name="guard"></ui-icon></button>
  <button type="button" class="wide" aria-label="Клавиатура"><ui-icon name="keyboard"></ui-icon></button>
  <button type="button" class="lang">РУС</button>
  <button type="button" class="clock"><span>14:08</span><span>05.06.2022</span></button>
  <button type="button" class="note" aria-label="Уведомления"><ui-icon name="notify"></ui-icon></button>
  <span class="desk"></span>
</div>`);

define('word-app', `<style>:host{display:flex;flex-direction:column;height:100vh;min-width:0;overflow:hidden}</style>
<title-bar></title-bar>
<ribbon-tabs></ribbon-tabs>
<word-ribbon></word-ribbon>
<doc-workspace></doc-workspace>
<status-bar></status-bar>
<task-bar></task-bar>`);
</script>
</body>
</html>
